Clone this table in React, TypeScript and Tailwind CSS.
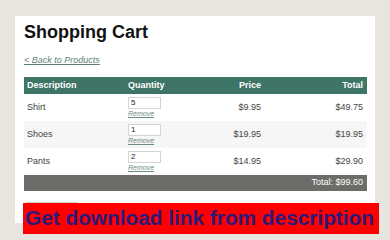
const items = [
  { name: "Shirt", qty: "5", price: "$9.95", total: "$49.75" },
  { name: "Shoes", qty: "1", price: "$19.95", total: "$19.95" },
  { name: "Pants", qty: "2", price: "$14.95", total: "$29.90" },
];

const cols = "grid grid-cols-[101px_66px_70px_106px]";

export default function App() {
  return (
    <div className="relative h-[240px] w-[390px] overflow-hidden bg-[#e8e5de] pl-[15px] pt-[16px] font-['Liberation_Sans',Arial,sans-serif]">
      <div className="w-[360px] bg-white pb-[1px] pl-[9px] pr-[8px] pt-[6px]">
        <h1 className="text-[18px] font-bold leading-[20px] text-[#111]">Shopping Cart</h1>
        <a href="#" className="mt-[12px] block text-[9px] italic leading-[12px] text-[#5b8276] underline">
          &lt; Back to Products
        </a>

        <div className="mt-[11px] w-[343px]">
          <div className={`${cols} h-[17px] items-center bg-[#3e7566] text-[9px] font-bold text-white`}>
            <div className="pl-[3px]">Description</div>
            <div className="pl-[3px]">Quantity</div>
            <div className="text-right">Price</div>
            <div className="pr-[4px] text-right">Total</div>
          </div>

          {items.map((item, i) => (
            <div
              key={item.name}
              className={`${cols} h-[27px] items-center text-[9px] text-[#444] ${i === 1 ? "bg-[#f6f6f6]" : "bg-white"}`}
            >
              <div className="pl-[3px]">{item.name}</div>
              <div className="flex flex-col pl-[3px]">
                <div className="flex h-[12px] w-[33px] items-center border border-[#d4d4d4] bg-white pl-[2px] text-[8px] text-[#222]">
                  {item.qty}
                </div>
                <a href="#" className="mt-[1px] text-[7px] italic leading-[8px] text-[#6b8b82] underline">
                  Remove
                </a>
              </div>
              <div className="text-right">{item.price}</div>
              <div className="pr-[4px] text-right">{item.total}</div>
            </div>
          ))}

          <div className="flex h-[16px] items-center justify-end bg-[#6c6c68] pr-[4px] text-[9px] text-white">
            Total: $99.60
          </div>
        </div>

        <div className="mt-[11px] h-[20px] w-[55px] rounded-t-[3px] border border-[#cfcfcf] bg-[#eeeeee]" />
      </div>

      <div className="absolute left-[23px] top-[203px] flex h-[31px] w-[356px] items-center bg-[#ff0000] pl-[2px] text-[20.8px] font-bold leading-none text-[#2b1a7c]">
        Get download link from description
      </div>
    </div>
  );
}
